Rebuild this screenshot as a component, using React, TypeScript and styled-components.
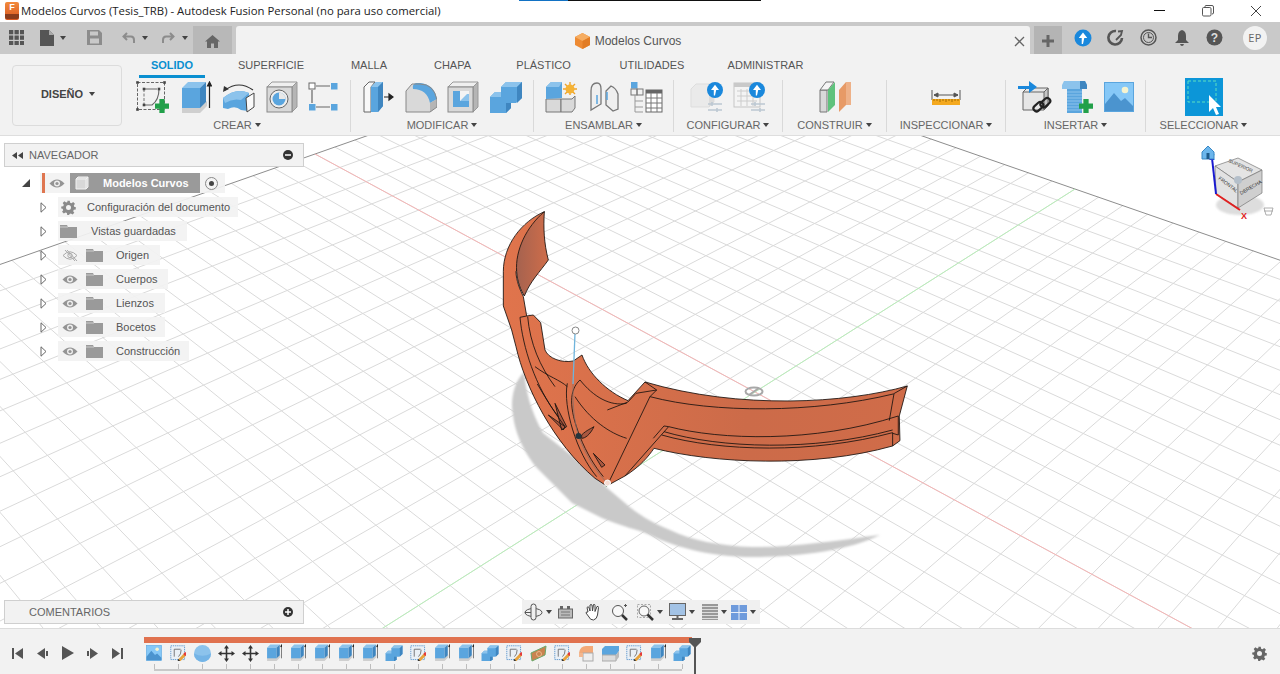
import React from "react";
import styled, { createGlobalStyle } from "styled-components";

const Global = createGlobalStyle`
  html, body { margin: 0; padding: 0; height: 100%; background: #fff; overflow: hidden; }
  body { font-family: "Liberation Sans", Arial, sans-serif; }
  #root { height: 100%; }
`;

const Page = styled.div`display:flex;flex-direction:column;width:1280px;height:674px;overflow:hidden;`;

/* ---------- title bar ---------- */
const TitleBar = styled.header`position:relative;display:flex;align-items:center;height:22px;flex:none;background:#fff;`;
const AppBadge = styled.div`
  display:flex;flex-direction:column;align-items:center;width:14px;height:18px;margin:0 2px 0 5px;border-radius:2px;
  background:linear-gradient(#f28a3c,#d9561f);color:#fff;font:bold 9px/11px "Liberation Sans",sans-serif;
`;
const BadgeFoot = styled.span`width:100%;height:5px;margin-top:1px;background:#8a3c1c;border-radius:0 0 2px 2px;`;
const WindowTitle = styled.span`font:11.35px/22px "Open Sans",sans-serif;color:#222;white-space:nowrap;`;
const WindowButtons = styled.div`display:flex;margin-left:auto;`;
const WindowButton = styled.div`display:flex;justify-content:center;align-items:center;width:48px;height:22px;`;
const LoadStrip = styled.div`position:absolute;left:519px;top:0;width:242px;height:1px;background:linear-gradient(90deg,#1272c4 0 49px,#111 49px);`;

/* ---------- tab bar ---------- */
const TabBar = styled.div`display:flex;align-items:flex-end;height:32px;flex:none;background:#c9c9c9;`;
const QuickSlot = styled.div<{ $w: number }>`display:flex;align-items:center;justify-content:center;box-sizing:border-box;width:${p => p.$w}px;height:28px;padding-bottom:5px;`;
const Gap = styled.span<{ $w: number }>`display:block;width:${p => p.$w}px;`;
const HomeButton = styled.div`display:flex;align-items:center;justify-content:center;box-sizing:border-box;width:39px;height:28px;padding-top:3px;background:#b8b8b8;margin-right:4px;`;
const DocTab = styled.div`position:relative;display:flex;align-items:center;justify-content:center;gap:5px;width:794px;height:28px;background:#f2f2f2;border-radius:3px 3px 0 0;padding:2px 10px 0 0;box-sizing:border-box;`;
const DocTitle = styled.span`font-size:12px;color:#555;`;
const TabClose = styled.span`position:absolute;right:5px;top:10px;display:flex;`;
const NewTab = styled.div`display:flex;align-items:center;justify-content:center;box-sizing:border-box;width:28px;height:28px;margin-left:4px;padding-top:2px;background:#b4b4b4;`;
const TopIcons = styled.div`display:flex;align-items:center;height:32px;flex:1;padding-left:4px;box-sizing:border-box;padding-bottom:1px;`;
const TopSlot = styled.div`display:flex;justify-content:center;width:33px;`;
const Avatar = styled.div`display:flex;align-items:center;justify-content:center;width:24px;height:24px;margin-left:12px;border-radius:50%;background:#f2f2f2;color:#666;font:11px "Open Sans",sans-serif;letter-spacing:.5px;`;

/* ---------- ribbon ---------- */
const Ribbon = styled.div`display:flex;height:82px;flex:none;background:#f2f2f2;border-bottom:1px solid #dedede;box-sizing:border-box;`;
const DesignButton = styled.div`display:flex;align-items:center;justify-content:center;gap:6px;box-sizing:border-box;width:110px;height:61px;margin:11px 2px 0 12px;padding:0 0 3px 2px;border:1px solid #dcdcdc;border-radius:4px;font-size:11px;font-weight:bold;color:#444;`;
const RibbonBody = styled.div`display:flex;flex-direction:column;flex:1;`;
const TabRow = styled.div`display:flex;height:24px;margin-left:15px;`;
const RibbonTab = styled.div<{ $w: number; $active?: boolean }>`
  display:flex;align-items:center;justify-content:center;box-sizing:border-box;width:${p => p.$w}px;height:24px;
  padding-top:1px;font-size:11px;color:${p => (p.$active ? "#0a8fd0" : "#555")};font-weight:${p => (p.$active ? "bold" : "normal")};
  border-bottom:3px solid ${p => (p.$active ? "#0a8fd0" : "transparent")};
`;
const GroupRow = styled.div`display:flex;height:57px;`;
const Group = styled.div<{ $w: number; $last?: boolean }>`
  display:flex;flex-direction:column;align-items:center;box-sizing:border-box;width:${p => p.$w}px;height:52px;margin-top:2px;
  border-right:1px solid ${p => (p.$last ? "transparent" : "#d9d9d9")};
`;
const GroupIcons = styled.div<{ $gap?: number }>`display:flex;flex:none;align-items:center;justify-content:center;gap:${p => p.$gap ?? 10}px;height:34px;`;
const GroupLabel = styled.div`display:flex;flex:none;align-items:center;gap:3px;height:16px;margin-top:3px;font-size:11px;color:#666;white-space:nowrap;`;
const Caret = styled.span`display:inline-block;width:0;height:0;border:3px solid transparent;border-top:4px solid #444;border-bottom:0;`;

/* ---------- viewport ---------- */
const Viewport = styled.main`position:relative;flex:1;min-height:0;background:#fff;overflow:hidden;`;
const SceneSvg = styled.svg`position:absolute;inset:0;width:100%;height:100%;display:block;`;
const Panel = styled.div<{ $top: number }>`
  position:absolute;left:4px;top:${p => p.$top}px;display:flex;align-items:center;box-sizing:border-box;width:300px;height:24px;
  background:#f2f2f2;border:1px solid #cfcfcf;font-size:11px;color:#666;
`;
const PanelLead = styled.span`display:flex;justify-content:center;width:24px;`;
const PanelButton = styled.span`display:flex;margin-left:auto;margin-right:10px;`;
const Tree = styled.div`position:absolute;left:0;top:35px;display:flex;flex-direction:column;`;
const TreeRow = styled.div`display:flex;align-items:center;height:24px;`;
const Expander = styled.span<{ $x: number; $w: number }>`display:flex;justify-content:flex-end;width:${p => p.$w}px;margin-right:${p => p.$x}px;`;
const Chip = styled.div<{ $w: number }>`display:flex;align-items:center;width:${p => p.$w}px;height:20px;background:rgba(242,242,242,.92);font-size:11px;color:#555;white-space:nowrap;`;
const TreeLabel = styled.span<{ $ml: number }>`margin-left:${p => p.$ml}px;`;
const IconSlot = styled.span<{ $w: number }>`display:flex;align-items:center;justify-content:center;flex:none;width:${p => p.$w}px;`;
const RootBar = styled.span`width:3px;height:20px;margin:0 1px 0 2px;flex:none;background:#df7650;`;
const RootBlock = styled.div`display:flex;align-items:center;width:130px;height:20px;margin-left:2px;background:#9a9a9a;color:#fff;font-weight:bold;font-size:11px;`;
const RootText = styled.span`margin-left:9px;`;
const NavBar = styled.div`position:absolute;left:522px;top:464px;display:flex;align-items:center;box-sizing:border-box;width:238px;height:24px;padding-left:2px;background:#f0f0f0;`;
const NavSlot = styled.span<{ $w: number }>`display:flex;align-items:center;justify-content:flex-start;flex:none;width:${p => p.$w}px;gap:3px;`;

/* ---------- timeline ---------- */
const Timeline = styled.footer`display:flex;height:46px;flex:none;background:#f2f2f2;border-top:1px solid #dcdcdc;box-sizing:border-box;`;
const Playback = styled.div`display:flex;align-items:center;width:142px;height:45px;padding-left:5px;box-sizing:border-box;padding-top:3px;`;
const PlaySlot = styled.span`display:flex;justify-content:center;width:25px;`;
const Track = styled.div`position:relative;display:flex;flex-direction:column;width:560px;padding-top:8px;`;
const TrackBar = styled.div`width:548px;height:6px;margin-left:2px;background:#e0724f;`;
const StepRow = styled.div`display:flex;margin-top:1px;`;
const Step = styled.div`display:flex;flex-direction:column;align-items:center;width:24px;`;
const StepIcon = styled.span`display:flex;height:18px;align-items:center;`;
const StepTick = styled.span`width:1px;height:5px;margin-top:2px;background:#bdbdbd;`;
const TrackBase = styled.div`width:528px;height:2px;margin-left:12px;background:#c9c9c9;`;
const Marker = styled.div`position:absolute;left:547px;top:9px;display:flex;`;
const Settings = styled.div`display:flex;align-items:center;margin-left:auto;margin-right:13px;padding-top:3px;`;

/* ---------- drawings ---------- */
const B1 = "#5aa5de", B2 = "#8cc3ec", B3 = "#3f86c0", G1 = "#d9d9d9", G2 = "#efefef", G3 = "#b5b5b5";
type IP = { s?: number };
const Ic = ({ w, h, s = 1, children }: { w: number; h: number; s?: number; children: React.ReactNode }) => (
  <svg width={w * s} height={h * s} viewBox={`0 0 ${w} ${h}`}>{children}</svg>
);
const Plus = ({ x, y, r = 6 }: { x: number; y: number; r?: number }) => (
  <path d={`M${x - r} ${y}H${x + r}M${x} ${y - r}V${y + r}`} stroke="#22a04a" strokeWidth={r * 0.75} fill="none" />
);
const SketchNew = (p: IP) => (
  <Ic w={34} h={33} s={p.s}>
    <rect x="1.5" y="1.5" width="27" height="27" fill="none" stroke="#666" strokeDasharray="3 1.5" />
    <path d="M8 8V24" stroke="#777" strokeDasharray="3 1.5" />
    <path d="M8 8H21M8 24H16Q23 19 23 8" fill="none" stroke="#666" strokeWidth="1.1" />
    {[[1.5, 1.5], [28.5, 1.5], [1.5, 28.5], [8, 8], [23, 8], [8, 24]].map(([a, b]) => <rect key={`${a}${b}`} x={a - 1.3} y={b - 1.3} width="2.6" height="2.6" fill="#444" />)}
    <Plus x={26} y={25} r={7} />
  </Ic>
);
const SketchEdit = (p: IP) => (
  <Ic w={32} h={32} s={p.s}>
    <rect x="1.5" y="1.5" width="26" height="26" fill="#eaf0f6" stroke="#4f8fcb" strokeDasharray="2.5 1.5" strokeWidth="1.6" />
    <path d="M8 8H20M8 8V22M16 22Q21 18 21 9" fill="none" stroke="#666" strokeWidth="1.6" />
    <path d="M15 28L27 15L31 19L19 31Z" fill="#e8a33c" /><path d="M14 31L16 26L19 30Z" fill="#333" /><circle cx="29" cy="17" r="3.3" fill="#e23b3b" />
  </Ic>
);
const Extrude = (p: IP) => (
  <Ic w={32} h={33} s={p.s}>
    <path d="M2 26H20L27 20V25L20 32H2Z" fill="#cfcfcf" />
    <path d="M2 7L8 1H26L20 7Z" fill={B2} /><path d="M2 7H20V27H2Z" fill={B1} /><path d="M20 7L26 1V21L20 27Z" fill={B3} />
    <path d="M29.5 27V2M27.5 5L29.5 1L31.500 5Z" stroke="#222" fill="#222" strokeWidth="1.2" />
  </Ic>
);
const Revolve = () => (
  <Ic w={34} h={32}>
    <path d="M3 9Q17 -1 31 9" fill="none" stroke="#333" strokeWidth="1.2" /><path d="M1 11L2 5L7 8Z" fill="#333" />
    <path d="M1 17Q14 6 27 12L26 30L19 29Q13 24 6 28L1 27Z" fill={B1} />
    <path d="M1 17Q14 6 27 12L19 19Q11 17 3 22Z" fill={B2} />
    <path d="M24 17L32 12V26L25 31Z" fill="#fafafa" stroke="#444" />
  </Ic>
);
const Hole = () => (
  <Ic w={32} h={32}>
    <path d="M1 6L6 1H31L26 6Z" fill={G2} stroke="#999" /><path d="M26 6L31 1V26L26 31Z" fill={G3} stroke="#999" />
    <rect x="1" y="6" width="25" height="25" fill={G1} stroke="#888" />
    <circle cx="13" cy="18" r="9" fill="#eee" stroke="#666" /><circle cx="13" cy="18" r="6.5" fill={B1} />
    <path d="M13 18V11.500A6.500 6.500 0 0 1 19.500 18Z" fill="#e8e8e8" />
  </Ic>
);
const FormIcon = () => (
  <Ic w={30} h={32}>
    <path d="M8 5H22M4 9V22M8 26H22" stroke="#666" strokeWidth="1.2" />
    <rect x="1" y="2" width="6" height="6" fill="#fff" stroke="#666" /><rect x="23" y="2" width="6.5" height="6.5" fill={B1} />
    <rect x="1" y="23" width="6.5" height="6.5" fill={B1} /><rect x="23" y="23" width="6.5" height="6.5" fill={B1} />
  </Ic>
);
const PressPull = () => (
  <Ic w={32} h={32}>
    <path d="M1 6L6 1H12L8 6V31H1Z" fill="#f8f8f8" stroke="#666" />
    <path d="M8 6L13 1H20V25L15 31H8Z" fill={B1} /><path d="M15 6H8L13 1H20Z" fill={B2} />
    <path d="M15 6L20 1V25L15 31Z" fill={B3} /><path d="M21 16H28M26 13L30 16L26 19Z" stroke="#222" fill="#222" strokeWidth="1.2" />
  </Ic>
);
const Fillet = () => (
  <Ic w={32} h={32}>
    <path d="M1 31V10L7 3H15Q29 3 32 19V26L26 31Z" fill={G1} />
    <path d="M8 8Q7 3 11 2H15Q29 3 32 18L25 22Q22 8 8 8Z" fill={B1} />
    <path d="M25 22L32 18V26L25 31Z" fill={G3} /><path d="M1 31V10L7 3H15Q29 3 32 19V26L25 31Z" fill="none" stroke="#888" />
  </Ic>
);
const Shell = () => (
  <Ic w={32} h={32}>
    <path d="M1 6L6 1H31L26 6Z" fill={G2} stroke="#999" /><path d="M26 6L31 1V26L26 31Z" fill={G3} stroke="#999" />
    <rect x="1" y="6" width="25" height="25" fill={G1} stroke="#888" /><rect x="6" y="10" width="16" height="16" fill="#f4f4f4" />
    <path d="M6 10H13V20H22V26H6Z" fill={B1} /><path d="M13 20L20 13H22V20Z" fill={B2} />
  </Ic>
);
const Combine = (p: IP) => (
  <Ic w={33} h={32} s={p.s}>
    <path d="M12 6L17 1H33V17L27 22H12Z" fill={B1} /><path d="M12 6L17 1H33L28 6Z" fill={B2} /><path d="M28 6L33 1V17L28 22Z" fill={B3} />
    <path d="M1 16L6 11H22V27L17 32H1Z" fill={B1} /><path d="M1 16L6 11H12V16Z" fill={B2} /><path d="M17 22H22V27L17 32Z" fill={B3} />
  </Ic>
);
const Component = () => (
  <Ic w={33} h={32}>
    <path d="M1 18H16V31H1Z" fill={G1} stroke="#777" /><path d="M16 18H27L30 15V27L27 31H16Z" fill={G1} stroke="#777" />
    <path d="M1 6L6 1H17V17L1 18Z" fill={B1} /><path d="M1 6L6 1H17L14 6Z" fill={B2} />
    <g stroke="#f0a42b" strokeWidth="1.4"><path d="M25 1V14M18 8H32M20 3L30 13M30 3L20 13" /></g><circle cx="25" cy="8" r="4.5" fill="#f5b335" />
  </Ic>
);
const Joint = () => (
  <Ic w={30} h={32}>
    <path d="M2 29V10Q2 2 8 2Q12 2 12 8V23Z" fill={G2} stroke="#777" strokeWidth="1.3" />
    <path d="M29 28V13Q27 7 22 5L17 10V24L24 30Z" fill={G2} stroke="#777" strokeWidth="1.3" />
    <path d="M8 14V23M18 11V19" stroke={B1} strokeWidth="1.5" />
  </Ic>
);
const Table = () => (
  <Ic w={33} h={32}>
    <rect x="1" y="1" width="6.5" height="6.5" fill={B1} /><rect x="1" y="8" width="6" height="6" fill="none" stroke="#777" /><rect x="7" y="8" width="6" height="6" fill="none" stroke="#777" />
    <path d="M5 14V31M5 20H13M5 26H13M5 31H13" stroke="#999" fill="none" />
    <rect x="16" y="9" width="16" height="22" fill="#fff" stroke="#666" /><rect x="16" y="9" width="16" height="3.5" fill="#666" />
    <path d="M16 17H32M16 22H32M16 27H32M21 12V31M27 12V31" stroke="#777" fill="none" />
  </Ic>
);
const Upload = ({ r = 8.5, x = 9, y = 9 }: { r?: number; x?: number; y?: number }) => (
  <>
    <circle cx={x} cy={y} r={r} fill="#1a88dc" />
    <path d={`M${x} ${y - r * 0.65}L${x + r * 0.5} ${y}H${x + r * 0.15}L${x} ${y + r * 0.7}L${x - r * 0.15} ${y + r * 0.7}V${y}H${x - r * 0.5}Z`} fill="#fff" />
  </>
);
const Sliders = () => <path d="M0 0H14M0 6H14M4 -2V2M9 4V8" stroke="#bcc8d2" strokeWidth="1.6" fill="none" />;
const ConfigA = () => (
  <Ic w={34} h={32}>
    <path d="M1 8L6 3H24V21L19 26H1Z" fill="#eaeaea" stroke="#ddd" /><path d="M19 8V26L24 21V3Z" fill="#dcdcdc" />
    <g transform="translate(18 23)"><Sliders /></g><Upload x={25} y={9} r={8} />
  </Ic>
);
const ConfigB = () => (
  <Ic w={34} h={32}>
    <rect x="1" y="2" width="26" height="24" fill="#f4f4f4" stroke="#c5c5c5" /><rect x="1" y="2" width="26" height="4" fill="#c9c9c9" />
    <path d="M4 10H24M4 15H24M4 20H24M8 8V25M14 8V25M20 8V25" stroke="#ccc" fill="none" />
    <g transform="translate(18 23)"><Sliders /></g><Upload x={24} y={9} r={8} />
  </Ic>
);
const Construct = () => (
  <Ic w={32} h={32}>
    <path d="M1 9H8V31H1Z" fill={G1} stroke="#777" /><path d="M1 9L7 1H15L9 9Z" fill="#f5f5f5" stroke="#777" />
    <path d="M9 9L16 1V24L9 31Z" fill="#5fc27c" /><path d="M20 9L27 1V24L20 31Z" fill="#e79a66" /><path d="M27 1H32V24H27Z" fill="#eeb188" />
  </Ic>
);
const Ruler = () => (
  <Ic w={30} h={32}>
    <path d="M1 9V19M29 9V19M3 14H27M3 14L7 12V16ZM27 14L23 12V16Z" stroke="#555" fill="#555" />
    <rect x="1" y="18" width="28" height="6" fill="#f4a91f" /><path d="M3 18v2M6 18v2M9 18v3M12 18v2M15 18v3M18 18v2M21 18v3M24 18v2M27 18v2" stroke="#a56c00" />
  </Ic>
);
const InsertLink = () => (
  <Ic w={34} h={34}>
    <path d="M5 12L9 8H30V26L26 30H5Z" fill="#e6e6e6" stroke="#666" /><path d="M26 12V30L30 26V8Z" fill="#c5c5c5" stroke="#666" /><path d="M5 12H26L30 8" fill="none" stroke="#666" />
    <path d="M0 6H11V1L19 7L11 13V9H0Z" fill="#1a88dc" />
    <g fill="none" stroke="#222" strokeWidth="2.2"><rect x="15" y="24" width="11" height="6" rx="3" transform="rotate(-42 20 27)" /><rect x="22" y="20" width="11" height="6" rx="3" transform="rotate(-42 27 23)" /></g>
  </Ic>
);
const Bolt = () => (
  <Ic w={32} h={33}>
    <path d="M0 4L2 0H23L25 4V8H0Z" fill={B2} /><path d="M18 0H23L25 4V8H18Z" fill={B3} />
    <rect x="5" y="8" width="15" height="24" fill={B1} /><path d="M5 11H20M5 14H20M5 17H20M5 20H20M5 23H20M5 26H20M5 29H20" stroke={B2} />
    <Plus x={24} y={25} r={7} />
  </Ic>
);
const ImageIcon = ({ s }: IP) => (
  <Ic w={30} h={30} s={s}>
    <rect x="0.5" y="0.5" width="29" height="29" fill="#86c8f7" stroke={B1} />
    <path d="M1 22L10 11L17 19L21 16L29 24V29H1Z" fill="#4b94cf" /><circle cx="21" cy="8" r="3.3" fill="#f6f3cf" />
  </Ic>
);
const SelectIcon = () => (
  <Ic w={38} h={38}>
    <rect width="38" height="38" fill="#0c96d8" /><rect x="3" y="3" width="28" height="21" fill="none" stroke="#5de0c0" strokeDasharray="3 2" />
    <path d="M24 17L24 34L28 30L31 37L34 36L31 29L36 29Z" fill="#fff" />
  </Ic>
);
const Eye = ({ off }: { off?: boolean }) => (
  <svg width="16" height="11" viewBox="0 0 16 11">
    {off ? (
      <g fill="none" stroke="#aaa"><path d="M1 5.500Q8 -2 15 5.500Q8 13 1 5.500Z" /><circle cx="8" cy="5.500" r="2.200" /><path d="M3 0L13 11M5 0L15 11" /></g>
    ) : (
      <><path d="M0.500 5.500Q8 -2.500 15.500 5.500Q8 13.500 0.500 5.500Z" fill="#949494" /><circle cx="8" cy="5.500" r="3" fill="#eee" /><circle cx="8" cy="5.500" r="1.600" fill="#949494" /></>
    )}
  </svg>
);
const Folder = () => (
  <svg width="17" height="13" viewBox="0 0 17 13"><path d="M0 0H7L8 2H17V13H0Z" fill="#9a9a9a" /><path d="M0 2H8" stroke="#eee" strokeWidth=".6" /></svg>
);
const Arrow = () => <svg width="7" height="11" viewBox="0 0 7 11"><path d="M1 .8L6 5.500L1 10.200Z" fill="#fff" stroke="#666" /></svg>;
const Gear = ({ c = "#8a8a8a" }: { c?: string }) => (
  <svg width="15" height="15" viewBox="0 0 24 24"><path fill={c} d="M10 1h4l.6 3.200 2.200.9 2.700-1.800 2.800 2.800-1.800 2.700.9 2.200L23.600 11v4l-3.200.6-.9 2.200 1.800 2.700-2.800 2.800-2.700-1.800-2.200.9L13 24h-3l-.6-3.200-2.200-.9-2.700 1.800-2.800-2.800 1.800-2.700-.9-2.200L.4 13.400v-3l3.200-.6.9-2.200L2.700 4.900l2.800-2.800 2.700 1.800 2.200-.9zM12 8a4 4 0 1 0 0 8 4 4 0 0 0 0-8z" /></svg>
);
const CircleSign = ({ plus }: { plus?: boolean }) => (
  <svg width="10" height="10" viewBox="0 0 10 10"><circle cx="5" cy="5" r="5" fill="#333" /><path d={plus ? "M2 5H8M5 2V8" : "M2 5H8"} stroke="#fff" strokeWidth="1.5" /></svg>
);
const BoxOrange = () => (
  <svg width="15" height="16" viewBox="0 0 15 16"><path d="M7.500 0L15 4V12L7.500 16L0 12V4Z" fill="#ee8b33" /><path d="M7.500 0L15 4L7.500 8L0 4Z" fill="#f6ad62" /><path d="M7.500 8L15 4V12L7.500 16Z" fill="#e27c24" /></svg>
);
const Move = () => (
  <svg width="17" height="17" viewBox="0 0 17 17"><path d="M8.500 0L11 3.500H9.300V7.700H13.500V6L17 8.500L13.500 11V9.300H9.300V13.500H11L8.500 17L6 13.500H7.700V9.300H3.500V11L0 8.500L3.500 6V7.700H7.700V3.500H6Z" fill="#333" /></svg>
);
const Sphere = () => <svg width="17" height="17" viewBox="0 0 17 17"><circle cx="8.500" cy="8.500" r="8.500" fill={B2} /><path d="M0 8.500A8.500 8.500 0 0 0 17 8.500Q8.500 13 0 8.500Z" fill="#74b4e6" /></svg>;
const PlanePatch = () => <svg width="17" height="17" viewBox="0 0 17 17"><path d="M1 8L16 1L15 10L2 16Z" fill="#c9834f" stroke="#6aa86a" /><circle cx="9" cy="9" r="2.500" fill="none" stroke="#e9b88c" /></svg>;
const FilletO = () => <svg width="17" height="17" viewBox="0 0 17 17"><path d="M1 8Q2 1 8 1H15V9H8V8Z" fill="#f3a978" /><rect x="5" y="8" width="10" height="8" fill="#eee" stroke="#aaa" /><path d="M1 8V12H5V8Z" fill="#f3b78f" /></svg>;
const ShellBlue = () => <svg width="17" height="17" viewBox="0 0 17 17"><path d="M0 4L3 1H17V6L14 10H0Z" fill={B1} /><path d="M0 10H14V16H0Z" fill="#dcdcdc" stroke="#aaa" /><path d="M14 10L17 6V12L14 16Z" fill="#bbb" /></svg>;

type StepKind = "img" | "sk" | "sph" | "mv" | "ex" | "cb" | "pl" | "fl" | "sh";
const steps: StepKind[] = ["img", "sk", "sph", "mv", "mv", "ex", "ex", "ex", "ex", "ex", "cb", "sk", "ex", "ex", "cb", "sk", "pl", "sk", "fl", "sh", "sk", "ex", "cb"];
const StepGlyph = ({ k }: { k: StepKind }) => {
  const s = 0.53;
  switch (k) {
    case "img": return <ImageIcon s={s} />;
    case "sk": return <SketchEdit s={s} />;
    case "sph": return <Sphere />;
    case "mv": return <Move />;
    case "ex": return <Extrude s={s} />;
    case "cb": return <Combine s={s} />;
    case "pl": return <PlanePatch />;
    case "fl": return <FilletO />;
    default: return <ShellBlue />;
  }
};

/* ground grid homography */
const H = { a: -322.7, b: 643.8, c: 755, d: -180.7, e: -146.1, f: 392, g: 0.3723, h: 0.3012 };
const proj = (s: number, t: number) => {
  const w = H.g * s + H.h * t + 1;
  return `${((H.a * s + H.b * t + H.c) / w).toFixed(1)} ${((H.d * s + H.e * t + H.f) / w).toFixed(1)}`;
};
const tMinFor = (s: number) => Math.max(-1.9, (0.12 - 1 - H.g * s) / H.h);
const sMinFor = (t: number) => Math.max(-1.9, (0.12 - 1 - H.h * t) / H.g);
const ladder = (near: number, far: number) => {
  const out: number[] = [0];
  for (let v = near; v < 0.97; v += near + (far - near) * v) out.push(v);
  for (let v = -near; v > -1.9; v -= near) out.push(v);
  return out;
};
const gridPath = (() => {
  let d = "";
  for (const s of ladder(0.042, 0.083)) d += `M${proj(s, 1)}L${proj(s, tMinFor(s))}`;
  for (const t of ladder(0.05, 0.08)) d += `M${proj(1, t)}L${proj(sMinFor(t), t)}`;
  return d;
})();

const Scene = () => (
  <SceneSvg viewBox="0 136 1280 492">
    <defs>
      <linearGradient id="innerFace" x1="0" x2="1" y1="0" y2="0"><stop offset="0" stopColor="#a5624f" /><stop offset="1" stopColor="#cf6d4a" /></linearGradient>
      <linearGradient id="bandFace" x1="0" x2="1" y1="0" y2="0"><stop offset="0" stopColor="#e0744c" /><stop offset=".6" stopColor="#cc6b49" /><stop offset="1" stopColor="#d06c49" /></linearGradient>
      <filter id="soft"><feGaussianBlur stdDeviation="1.2" /></filter>
    </defs>
    <path d={gridPath} fill="none" stroke="#dadada" strokeWidth="1" />
    <path d={`M${proj(1, -0.8)}L${proj(1, 1)}L${proj(-1.9, 1)}`} fill="none" stroke="#8d8d8d" strokeWidth="1" />
    <path d={`M${proj(1, 0)}L${proj(-1.4, 0)}`} stroke="#f5b5b5" strokeWidth="1" />
    <path d={`M${proj(0, 1)}L${proj(0, -1.5)}`} stroke="#b9efb9" strokeWidth="1" />
    <path filter="url(#soft)" fill="#c9c9c9" d="M524 372C514 382 510 400 513 415C516 440 530 460 537 468L572 503L602 518C620 526 640 530 650 535C680 550 720 557 752 557C800 557 850 550 880 535C840 540 790 548 752 547C720 546 690 540 670 530C650 522 635 512 625 503L606 487L590 470L543 433C530 410 526 390 524 372Z" />
    <ellipse cx="754" cy="391.500" rx="8.500" ry="4" fill="none" stroke="#a8a8a8" strokeWidth="2" />
    <path d="M749 395L759 388" stroke="#a8a8a8" strokeWidth="2" />
    <g transform="translate(480 200) scale(.3333)" stroke="#1c1410" strokeWidth="2.6" strokeLinejoin="round">
      <path fill="url(#bandFace)" d="M193 35C125 65 70 135 70 215L70 318L95 390L108 440C135 560 220 730 345 835L380 858L435 828C480 800 505 770 522 745C700 790 1000 805 1238 738L1260 722L1258 648L1282 558C1100 610 780 630 495 546L444 602C380 575 325 520 306 465L280 483C245 490 205 475 195 450L182 368L160 345L140 348L130 290C120 270 108 240 108 215Z" />
      <path fill="url(#innerFace)" d="M193 35C140 80 105 150 110 215C112 245 122 270 133 288C150 245 180 215 205 180C192 130 190 85 193 35Z" />
      <path fill="#a9573f" d="M225 610L260 680L245 690ZM340 760L375 795L365 802ZM205 645L255 680L250 690ZM305 705C320 690 335 685 342 680C330 705 315 715 305 715Z" />
      <g fill="none">
        <path d="M120 352L140 348M120 352C128 440 165 560 235 650M143 350C150 430 180 500 225 560" />
        <path d="M165 500C205 530 240 540 262 560M172 552C200 600 225 640 255 680" />
        <path d="M262 550C248 620 290 760 350 830M300 540C268 570 265 620 300 710C320 760 345 800 370 830" />
        <path d="M300 540C340 590 390 620 440 610M285 590C330 660 390 700 440 715" />
        <path d="M382 630L444 606L468 580L530 570L495 546" />
        <path d="M510 590L385 850M530 570L510 590" />
        <path d="M566 680L435 828M566 680L552 678L520 715" />
        <path d="M510 590C700 640 1000 640 1240 582L1282 558" />
        <path d="M566 680C720 720 1000 730 1255 648L1255 705L1238 700M552 695C720 745 1000 755 1238 690M545 705C720 755 1000 762 1238 698" />
        <path d="M1242 582L1228 662M1238 698L1238 738" />
      </g>
    </g>
    <path d="M575 333L573 384" fill="none" stroke="#6fb4dc" strokeWidth="1.3" />
    <path d="M573 384Q572 420 580 440Q590 465 607 483" fill="none" stroke="#8a7068" strokeWidth=".8" />
    <circle cx="575.500" cy="330.500" r="3.500" fill="#fff" stroke="#888" />
    <circle cx="578.500" cy="436" r="3" fill="#24343c" />
    <circle cx="607.500" cy="483" r="3" fill="#f6dcd2" stroke="#fff" />
    {/* view cube */}
    <ellipse cx="1240" cy="205" rx="24" ry="10" fill="#ddd" filter="url(#soft)" />
    <path d="M1215 166L1238 158L1262 170L1238 182Z" fill="#e4e4e4" stroke="#777" strokeWidth=".7" />
    <path d="M1215 166L1238 182V208L1216 194Z" fill="#e2e2e2" stroke="#777" strokeWidth=".7" />
    <path d="M1238 182L1262 170V193L1238 208Z" fill="#cfcfcf" stroke="#777" strokeWidth=".7" />
    <circle cx="1238" cy="180" r="4" fill="#b4bfca" />
    <text transform="translate(1228 162) rotate(24)" fontSize="5" fill="#444" fontFamily="Liberation Sans">SUPERIOR</text>
    <text transform="translate(1218 179) rotate(37)" fontSize="5" fill="#333" fontFamily="Liberation Sans">FRONTAL</text>
    <text transform="translate(1241 195) rotate(-30)" fontSize="5" fill="#333" fontFamily="Liberation Sans">DERECHA</text>
    <path d="M1216 194L1240 210" stroke="#e02020" strokeWidth="2" />
    <path d="M1216 194L1212 158" stroke="#1a1ad0" strokeWidth="2" />
    <text x="1241" y="219" fontSize="9" fill="#e02020" fontWeight="bold" fontFamily="Liberation Sans">X</text>
    <text x="1209" y="160" fontSize="9" fill="#1a1ad0" fontWeight="bold" fontFamily="Liberation Sans">Z</text>
    <path d="M1202 152L1208 146L1214 152V159H1202Z" fill="#6cb6ec" stroke="#3a88c4" /><rect x="1206.500" y="153" width="3" height="6" fill="#1e5a8a" />
    <path d="M1264 208H1273L1271 215H1266ZM1264 211H1273" fill="#fff" stroke="#999" strokeWidth=".8" />
  </SceneSvg>
);

const tabs: [string, number, boolean?][] = [["SOLIDO", 66, true], ["SUPERFICIE", 132], ["MALLA", 64], ["CHAPA", 103], ["PLÁSTICO", 79], ["UTILIDADES", 138], ["ADMINISTRAR", 89]];
const folders: [string, number, boolean?][] = [["Origen", 102, true], ["Cuerpos", 110], ["Lienzos", 107], ["Bocetos", 107], ["Construcción", 131]];

export default function App() {
  return (
    <Page>
      <Global />
      <TitleBar>
        <LoadStrip />
        <AppBadge>F<BadgeFoot /></AppBadge>
        <WindowTitle>Modelos Curvos (Tesis_TRB) - Autodesk Fusion Personal (no para uso comercial)</WindowTitle>
        <WindowButtons>
          <WindowButton><svg width="12" height="2"><rect width="11" height="1" y="0" fill="#111" /></svg></WindowButton>
          <WindowButton><svg width="12" height="12" viewBox="0 0 12 12" fill="none" stroke="#555"><rect x=".5" y="2.500" width="8.500" height="8.500" rx="1.200" /><path d="M3 2.500V1.500Q3 .5 4 .5H10Q11.500 .5 11.500 2V8Q11.500 9 10 9" /></svg></WindowButton>
          <WindowButton><svg width="12" height="12" viewBox="0 0 12 12" stroke="#444"><path d="M1 1L11 11M11 1L1 11" /></svg></WindowButton>
        </WindowButtons>
      </TitleBar>

      <TabBar>
        <QuickSlot $w={32}><svg width="15" height="15" viewBox="0 0 15 15" fill="#555">{[0, 5.5, 11].flatMap(x => [0, 5.5, 11].map(y => <rect key={`${x}-${y}`} x={x} y={y} width="4.300" height="4.300" />))}</svg></QuickSlot>
        <QuickSlot $w={42}><svg width="14" height="16" viewBox="0 0 14 16"><path d="M0 0H9L14 5V16H0Z" fill="#555" /><path d="M9 0V5H14Z" fill="#aaa" /></svg><Gap $w={6} /><Caret /></QuickSlot>
        <QuickSlot $w={40}><svg width="15" height="15" viewBox="0 0 15 15"><path d="M0 0H12L15 3V15H0Z" fill="#8c8c8c" /><rect x="3" y="1.500" width="8" height="4" fill="#c9c9c9" /><rect x="3" y="8.500" width="9" height="5" fill="#c9c9c9" /></svg></QuickSlot>
        <QuickSlot $w={42}><svg width="13" height="12" viewBox="0 0 13 12" fill="none" stroke="#8c8c8c" strokeWidth="2"><path d="M5 1L1.500 4.500L5 8M2 4.500H9Q12 4.500 12 8V11" /></svg><Gap $w={7} /><Caret /></QuickSlot>
        <QuickSlot $w={37}><svg width="13" height="12" viewBox="0 0 13 12" fill="none" stroke="#8c8c8c" strokeWidth="2"><path d="M8 1L11.500 4.500L8 8M11 4.500H4Q1 4.500 1 8V11" /></svg><Gap $w={7} /><Caret /></QuickSlot>
        <HomeButton><svg width="15" height="13" viewBox="0 0 15 13"><path d="M7.500 0L15 6.500H13V13H9V8.500H6V13H2V6.500H0Z" fill="#666" /></svg></HomeButton>
        <DocTab>
          <BoxOrange />
          <DocTitle>Modelos Curvos</DocTitle>
          <TabClose><svg width="11" height="11" viewBox="0 0 11 11" stroke="#666" strokeWidth="1.300"><path d="M1 1L10 10M10 1L1 10" /></svg></TabClose>
        </DocTab>
        <NewTab><svg width="14" height="14" viewBox="0 0 14 14"><path d="M7 1V13M1 7H13" stroke="#666" strokeWidth="3" /></svg></NewTab>
        <TopIcons>
          <TopSlot><svg width="18" height="18" viewBox="0 0 18 18"><Upload /></svg></TopSlot>
          <TopSlot><svg width="17" height="17" viewBox="0 0 17 17" fill="none" stroke="#555" strokeWidth="2.600"><path d="M9 2A6.800 6.800 0 1 0 15 9" /><path d="M11 2.500L15 2L14 6L9 11" strokeWidth="1.800" /></svg></TopSlot>
          <TopSlot><svg width="17" height="17" viewBox="0 0 17 17" fill="none" stroke="#555"><circle cx="8.500" cy="8.500" r="7.500" strokeWidth="1.500" /><circle cx="8.500" cy="8.500" r="5" strokeWidth="1" /><path d="M8.500 4.500V8.500H12" strokeWidth="1.400" /></svg></TopSlot>
          <TopSlot><svg width="14" height="16" viewBox="0 0 14 16"><path d="M7 0Q11 1 11 6V10L14 13H0L3 10V6Q3 1 7 0ZM5 14H9Q8.500 16 7 16Q5.500 16 5 14Z" fill="#555" /></svg></TopSlot>
          <TopSlot><svg width="17" height="17" viewBox="0 0 17 17"><circle cx="8.500" cy="8.500" r="8" fill="#555" /><text x="8.500" y="13" textAnchor="middle" fontSize="12" fontWeight="bold" fill="#ddd" fontFamily="Liberation Sans">?</text></svg></TopSlot>
          <Avatar>EP</Avatar>
        </TopIcons>
      </TabBar>

      <Ribbon>
        <DesignButton>DISEÑO <Caret /></DesignButton>
        <RibbonBody>
          <TabRow>{tabs.map(([t, w, a]) => <RibbonTab key={t} $w={w} $active={a}>{t}</RibbonTab>)}</TabRow>
          <GroupRow>
            <Group $w={227}><GroupIcons><SketchNew /><Extrude /><Revolve /><Hole /><FormIcon /></GroupIcons><GroupLabel>CREAR <Caret /></GroupLabel></Group>
            <Group $w={183}><GroupIcons><PressPull /><Fillet /><Shell /><Combine /></GroupIcons><GroupLabel>MODIFICAR <Caret /></GroupLabel></Group>
            <Group $w={140}><GroupIcons $gap={11}><Component /><Joint /><Table /></GroupIcons><GroupLabel>ENSAMBLAR <Caret /></GroupLabel></Group>
            <Group $w={109}><GroupIcons $gap={9}><ConfigA /><ConfigB /></GroupIcons><GroupLabel>CONFIGURAR <Caret /></GroupLabel></Group>
            <Group $w={104}><GroupIcons><Construct /></GroupIcons><GroupLabel>CONSTRUIR <Caret /></GroupLabel></Group>
            <Group $w={119}><GroupIcons><Ruler /></GroupIcons><GroupLabel>INSPECCIONAR <Caret /></GroupLabel></Group>
            <Group $w={140}><GroupIcons><InsertLink /><Bolt /><ImageIcon /></GroupIcons><GroupLabel>INSERTAR <Caret /></GroupLabel></Group>
            <Group $w={116} $last><GroupIcons><SelectIcon /></GroupIcons><GroupLabel>SELECCIONAR <Caret /></GroupLabel></Group>
          </GroupRow>
        </RibbonBody>
      </Ribbon>

      <Viewport>
        <Scene />
        <Panel $top={7}>
          <PanelLead><svg width="11" height="7" viewBox="0 0 11 7" fill="#444"><path d="M5 0V7L0 3.500ZM11 0V7L6 3.500Z" /></svg></PanelLead>
          NAVEGADOR
          <PanelButton><CircleSign /></PanelButton>
        </Panel>
        <Tree>
          <TreeRow>
            <Expander $w={30} $x={10}><svg width="8" height="8" viewBox="0 0 8 8"><path d="M8 0V8H0Z" fill="#444" /></svg></Expander>
            <Chip $w={185}>
              <RootBar /><IconSlot $w={22}><Eye /></IconSlot>
              <RootBlock>
                <IconSlot $w={24}><svg width="14" height="14" viewBox="0 0 14 14" fill="#d8d8d8" stroke="#f2f2f2"><path d="M1 3L3 1H13V11L11 13H1Z" /><path d="M11 3V13M1 3H11L13 1" fill="none" /></svg></IconSlot>
                <RootText>Modelos Curvos</RootText>
              </RootBlock>
              <IconSlot $w={22}><svg width="13" height="13" viewBox="0 0 13 13"><circle cx="6.500" cy="6.500" r="6" fill="#f4f4f4" stroke="#888" /><circle cx="6.500" cy="6.500" r="2.500" fill="#444" /></svg></IconSlot>
            </Chip>
          </TreeRow>
          <TreeRow>
            <Expander $w={47} $x={11}><Arrow /></Expander>
            <Chip $w={180}><IconSlot $w={21}><Gear /></IconSlot><TreeLabel $ml={8}>Configuración del documento</TreeLabel></Chip>
          </TreeRow>
          <TreeRow>
            <Expander $w={47} $x={11}><Arrow /></Expander>
            <Chip $w={129}><IconSlot $w={21}><Folder /></IconSlot><TreeLabel $ml={12}>Vistas guardadas</TreeLabel></Chip>
          </TreeRow>
          {folders.map(([name, w, off]) => (
            <TreeRow key={name}>
              <Expander $w={47} $x={11}><Arrow /></Expander>
              <Chip $w={w}><IconSlot $w={23}><Eye off={off} /></IconSlot><IconSlot $w={27}><Folder /></IconSlot><TreeLabel $ml={8}>{name}</TreeLabel></Chip>
            </TreeRow>
          ))}
        </Tree>
        <NavBar>
          <NavSlot $w={34}><svg width="19" height="18" viewBox="0 0 19 18" fill="none" stroke="#555"><ellipse cx="9.500" cy="9.500" rx="8.500" ry="4" /><rect x="7" y="1" width="5" height="16" rx="2.500" fill="#f0f0f0" /><path d="M1 9.500H7" /></svg><Caret /></NavSlot>
          <NavSlot $w={27}><svg width="15" height="14" viewBox="0 0 15 14"><rect x="0.500" y="4" width="14" height="9" fill="#bbb" stroke="#666" /><rect x="2" y="1" width="3" height="3" fill="#666" /><rect x="9" y="1" width="3" height="3" fill="#666" /><path d="M3 7H12M3 10H12" stroke="#777" /></svg></NavSlot>
          <NavSlot $w={26}><svg width="16" height="18" viewBox="0 0 16 18" fill="#fff" stroke="#444"><path d="M3 9L2 4.500Q3 3 4 4.500L5 8L5 2Q6 1 7 2L7.500 8L8.500 1.500Q10 1 10 2.500L10 8.500L12 3.500Q13.500 3 13.500 4.500L12.500 12Q12 16 8.500 17Q5 17 4 14L1 10Q1 8.500 3 9Z" /></svg></NavSlot>
          <NavSlot $w={26}><svg width="17" height="17" viewBox="0 0 17 17" fill="none" stroke="#555"><circle cx="7" cy="7" r="5.500" fill="#f8f8f8" /><path d="M11 11L16 16" strokeWidth="2.500" stroke="#333" /><path d="M13 1.500H16M14.500 0V3" /></svg></NavSlot>
          <NavSlot $w={32}><svg width="17" height="17" viewBox="0 0 17 17" fill="none" stroke="#666"><rect x="0.500" y="0.500" width="13" height="13" strokeDasharray="2 1.500" stroke="#aaa" /><circle cx="7" cy="7" r="5" fill="#f8f8f8" /><path d="M10.500 10.500L16 16" strokeWidth="2.500" stroke="#333" /></svg><Caret /></NavSlot>
          <NavSlot $w={33}><svg width="17" height="18" viewBox="0 0 17 18"><rect x="0.500" y="0.500" width="16" height="12" fill="#a3c3e6" stroke="#666" /><path d="M8.500 13V15" stroke="#666" strokeWidth="2" /><path d="M3 16H14" stroke="#666" strokeWidth="2" /></svg><Caret /></NavSlot>
          <NavSlot $w={29}><svg width="16" height="16" viewBox="0 0 16 16"><rect width="16" height="16" fill="#999" /><path d="M0 2.500H16M0 5.500H16M0 8.500H16M0 11.500H16M0 14.500H16" stroke="#ddd" /></svg><Caret /></NavSlot>
          <NavSlot $w={28}><svg width="16" height="15" viewBox="0 0 16 15"><rect width="16" height="15" fill="#6f9bdc" /><path d="M8 0V15M0 7.500H16" stroke="#e8eef8" /></svg><Caret /></NavSlot>
        </NavBar>
        <Panel $top={464}>
          <PanelLead />COMENTARIOS
          <PanelButton><CircleSign plus /></PanelButton>
        </Panel>
      </Viewport>

      <Timeline>
        <Playback>
          <PlaySlot><svg width="11" height="11" viewBox="0 0 11 11" fill="#555"><rect width="2" height="11" /><path d="M11 0V11L3 5.500Z" /></svg></PlaySlot>
          <PlaySlot><svg width="11" height="11" viewBox="0 0 11 11" fill="#555"><path d="M8 0V11L0 5.500Z" /><rect x="9" y="3" width="2" height="5" /></svg></PlaySlot>
          <PlaySlot><svg width="12" height="14" viewBox="0 0 12 14" fill="#555"><path d="M0 0V14L12 7Z" /></svg></PlaySlot>
          <PlaySlot><svg width="11" height="11" viewBox="0 0 11 11" fill="#555"><path d="M3 0V11L11 5.500Z" /><rect y="3" width="2" height="5" /></svg></PlaySlot>
          <PlaySlot><svg width="11" height="11" viewBox="0 0 11 11" fill="#555"><rect x="9" width="2" height="11" /><path d="M0 0V11L8 5.500Z" /></svg></PlaySlot>
        </Playback>
        <Track>
          <TrackBar />
          <StepRow>{steps.map((k, i) => <Step key={i}><StepIcon><StepGlyph k={k} /></StepIcon><StepTick /></Step>)}</StepRow>
          <TrackBase />
          <Marker><svg width="12" height="38" viewBox="0 0 12 38"><path d="M0 0H12V4L7 9V38H5V9L0 4Z" fill="#555" /></svg></Marker>
        </Track>
        <Settings><Gear c="#666" /></Settings>
      </Timeline>
    </Page>
  );
}
